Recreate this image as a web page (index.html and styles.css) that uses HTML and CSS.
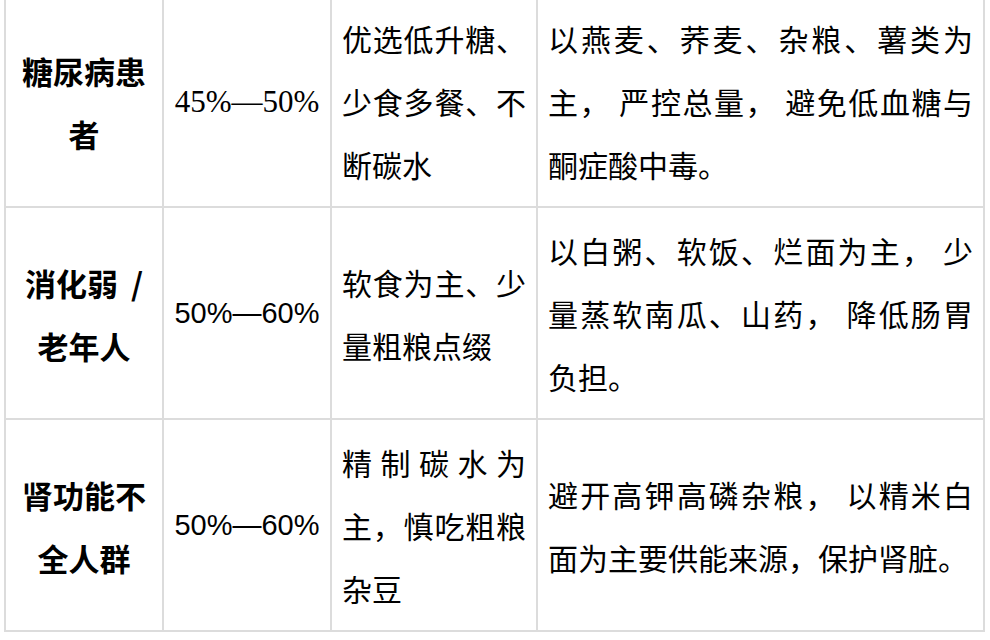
FILE: index.html
```html
<!DOCTYPE html>
<html lang="zh-CN">
<head>
<meta charset="utf-8">
<title>碳水摄入建议</title>
<link rel="stylesheet" href="styles.css">
</head>
<body>
<table class="diet-table">
  <colgroup>
    <col class="c-group">
    <col class="c-ratio">
    <col class="c-principle">
    <col class="c-advice">
  </colgroup>
  <tbody>
    <tr>
      <td class="group">糖尿病患者</td>
      <td class="ratio serif">45%—50%</td>
      <td class="text">优选低升糖、少食多餐、不断碳水</td>
      <td class="text">以燕麦、荞麦、杂粮、薯类为主， 严控总量， 避免低血糖与酮症酸中毒。</td>
    </tr>
    <tr>
      <td class="group">消化弱 <span class="slash">/</span> 老年人</td>
      <td class="ratio">50%—60%</td>
      <td class="text">软食为主、少量粗粮点缀</td>
      <td class="text">以白粥、软饭、烂面为主， 少量蒸软南瓜、山药， 降低肠胃负担。</td>
    </tr>
    <tr>
      <td class="group">肾功能不全人群</td>
      <td class="ratio">50%—60%</td>
      <td class="text">精制碳水为主，慎吃粗粮杂豆</td>
      <td class="text">避开高钾高磷杂粮， 以精米白面为主要供能来源，保护肾脏。</td>
    </tr>
  </tbody>
</table>
</body>
</html>
```

FILE: styles.css
```css
html, body {
  margin: 0;
  padding: 0;
  background: #ffffff;
}

body {
  font-family: "Noto Sans CJK SC", "Liberation Sans", sans-serif;
  color: #000000;
}

.diet-table {
  border-collapse: collapse;
  table-layout: fixed;
  width: 979px;
  margin: -6px 0 0 4px;
}

.c-group { width: 158px; }
.c-ratio { width: 168px; }
.c-principle { width: 206px; }
.c-advice { width: 447px; }

.diet-table td {
  border: 2px solid #dcdcdc;
  padding: 11px 10px 10px;
  vertical-align: middle;
  font-size: 30px;
  line-height: 63px;
}

.diet-table td.group {
  text-align: center;
  font-weight: 700;
  font-size: 31px;
  padding: 11px 10px 10px;
}

.diet-table td.group .slash {
  margin-left: 6px;
}

.diet-table td.ratio {
  text-align: center;
  font-family: "Liberation Sans", "Noto Sans CJK SC", sans-serif;
  font-size: 29px;
  white-space: nowrap;
}

.diet-table td.ratio.serif {
  font-family: "Liberation Serif", "Noto Sans CJK SC", serif;
  font-size: 31px;
}

.diet-table td.text {
  text-align: justify;
}
```
